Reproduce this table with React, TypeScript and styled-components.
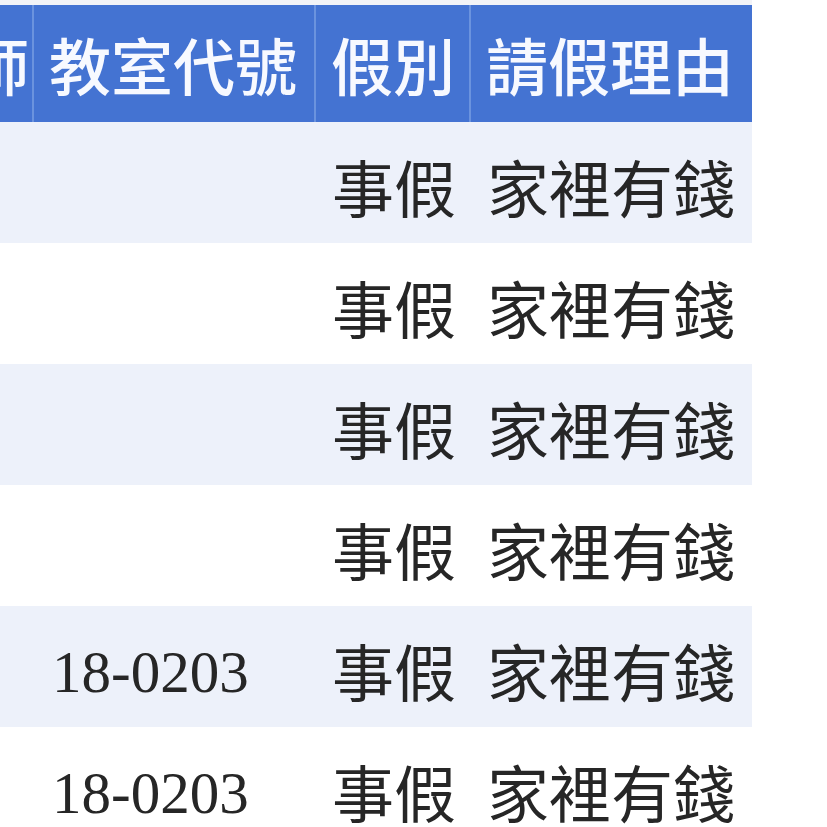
import styled, { createGlobalStyle } from "styled-components";

const GlobalStyle = createGlobalStyle`
  html, body {
    margin: 0;
    padding: 0;
    background: #ffffff;
    overflow: hidden;
  }
  body {
    font-family: "Noto Sans CJK TC", "Noto Sans", sans-serif;
  }
`;

type Row = {
  teacher: string;
  room: string;
  kind: string;
  reason: string;
};

const rows: Row[] = [
  { teacher: "", room: "", kind: "事假", reason: "家裡有錢" },
  { teacher: "", room: "", kind: "事假", reason: "家裡有錢" },
  { teacher: "", room: "", kind: "事假", reason: "家裡有錢" },
  { teacher: "", room: "", kind: "事假", reason: "家裡有錢" },
  { teacher: "", room: "18-0203", kind: "事假", reason: "家裡有錢" },
  { teacher: "", room: "18-0203", kind: "事假", reason: "家裡有錢" },
];

const Page = styled.div`
  width: 827px;
  height: 827px;
  overflow: hidden;
  background: #ffffff;
`;

// thin off-white band above the header, only as wide as the table
const TopBand = styled.div`
  width: 752px;
  height: 5px;
  background: #f2f3f7;
`;

const Table = styled.table`
  border-collapse: collapse;
  table-layout: fixed;
  width: 819px;
  margin-left: -67px;
`;

const HeadCell = styled.th<{ $w: number; $align?: string }>`
  width: ${(p) => p.$w}px;
  height: 117px;
  padding: 0 0 0 15px;
  box-sizing: border-box;
  background: #4473d2;
  color: #f7f9ff;
  font-size: 62px;
  font-weight: 500;
  text-align: ${(p) => p.$align ?? "left"};
  white-space: nowrap;
  overflow: hidden;
  border-left: 2px solid #6b93de;
  line-height: 1;
  &:first-child {
    border-left: 0;
    padding: 0 3px 0 0;
  }
`;

const BodyRow = styled.tr<{ $shade: boolean }>`
  background: ${(p) => (p.$shade ? "#edf1fa" : "#ffffff")};
`;

const Cell = styled.td<{ $serif?: boolean }>`
  height: 121px;
  padding: 6px 0 0 15px;
  box-sizing: border-box;
  color: #262626;
  font-size: ${(p) => (p.$serif ? "59px" : "62px")};
  font-family: ${(p) =>
    p.$serif
      ? `"Liberation Serif", "Times New Roman", serif`
      : `"Noto Sans CJK TC", "Noto Sans", sans-serif`};
  white-space: nowrap;
  overflow: hidden;
  line-height: 1;
  vertical-align: middle;
  &:nth-child(2) {
    padding-left: 19px;
    padding-top: 12px;
  }
  &:nth-child(3) {
    padding-left: 17px;
  }
  &:nth-child(4) {
    padding-left: 17px;
  }
`;

export default function App() {
  return (
    <>
      <GlobalStyle />
      <Page>
        <TopBand />
        <Table>
          <thead>
            <tr>
              <HeadCell $w={100} $align="right">師</HeadCell>
              <HeadCell $w={282}>教室代號</HeadCell>
              <HeadCell $w={155}>假別</HeadCell>
              <HeadCell $w={282}>請假理由</HeadCell>
            </tr>
          </thead>
          <tbody>
            {rows.map((r, i) => (
              <BodyRow key={i} $shade={i % 2 === 0}>
                <Cell>{r.teacher}</Cell>
                <Cell $serif>{r.room}</Cell>
                <Cell>{r.kind}</Cell>
                <Cell>{r.reason}</Cell>
              </BodyRow>
            ))}
          </tbody>
        </Table>
      </Page>
    </>
  );
}
